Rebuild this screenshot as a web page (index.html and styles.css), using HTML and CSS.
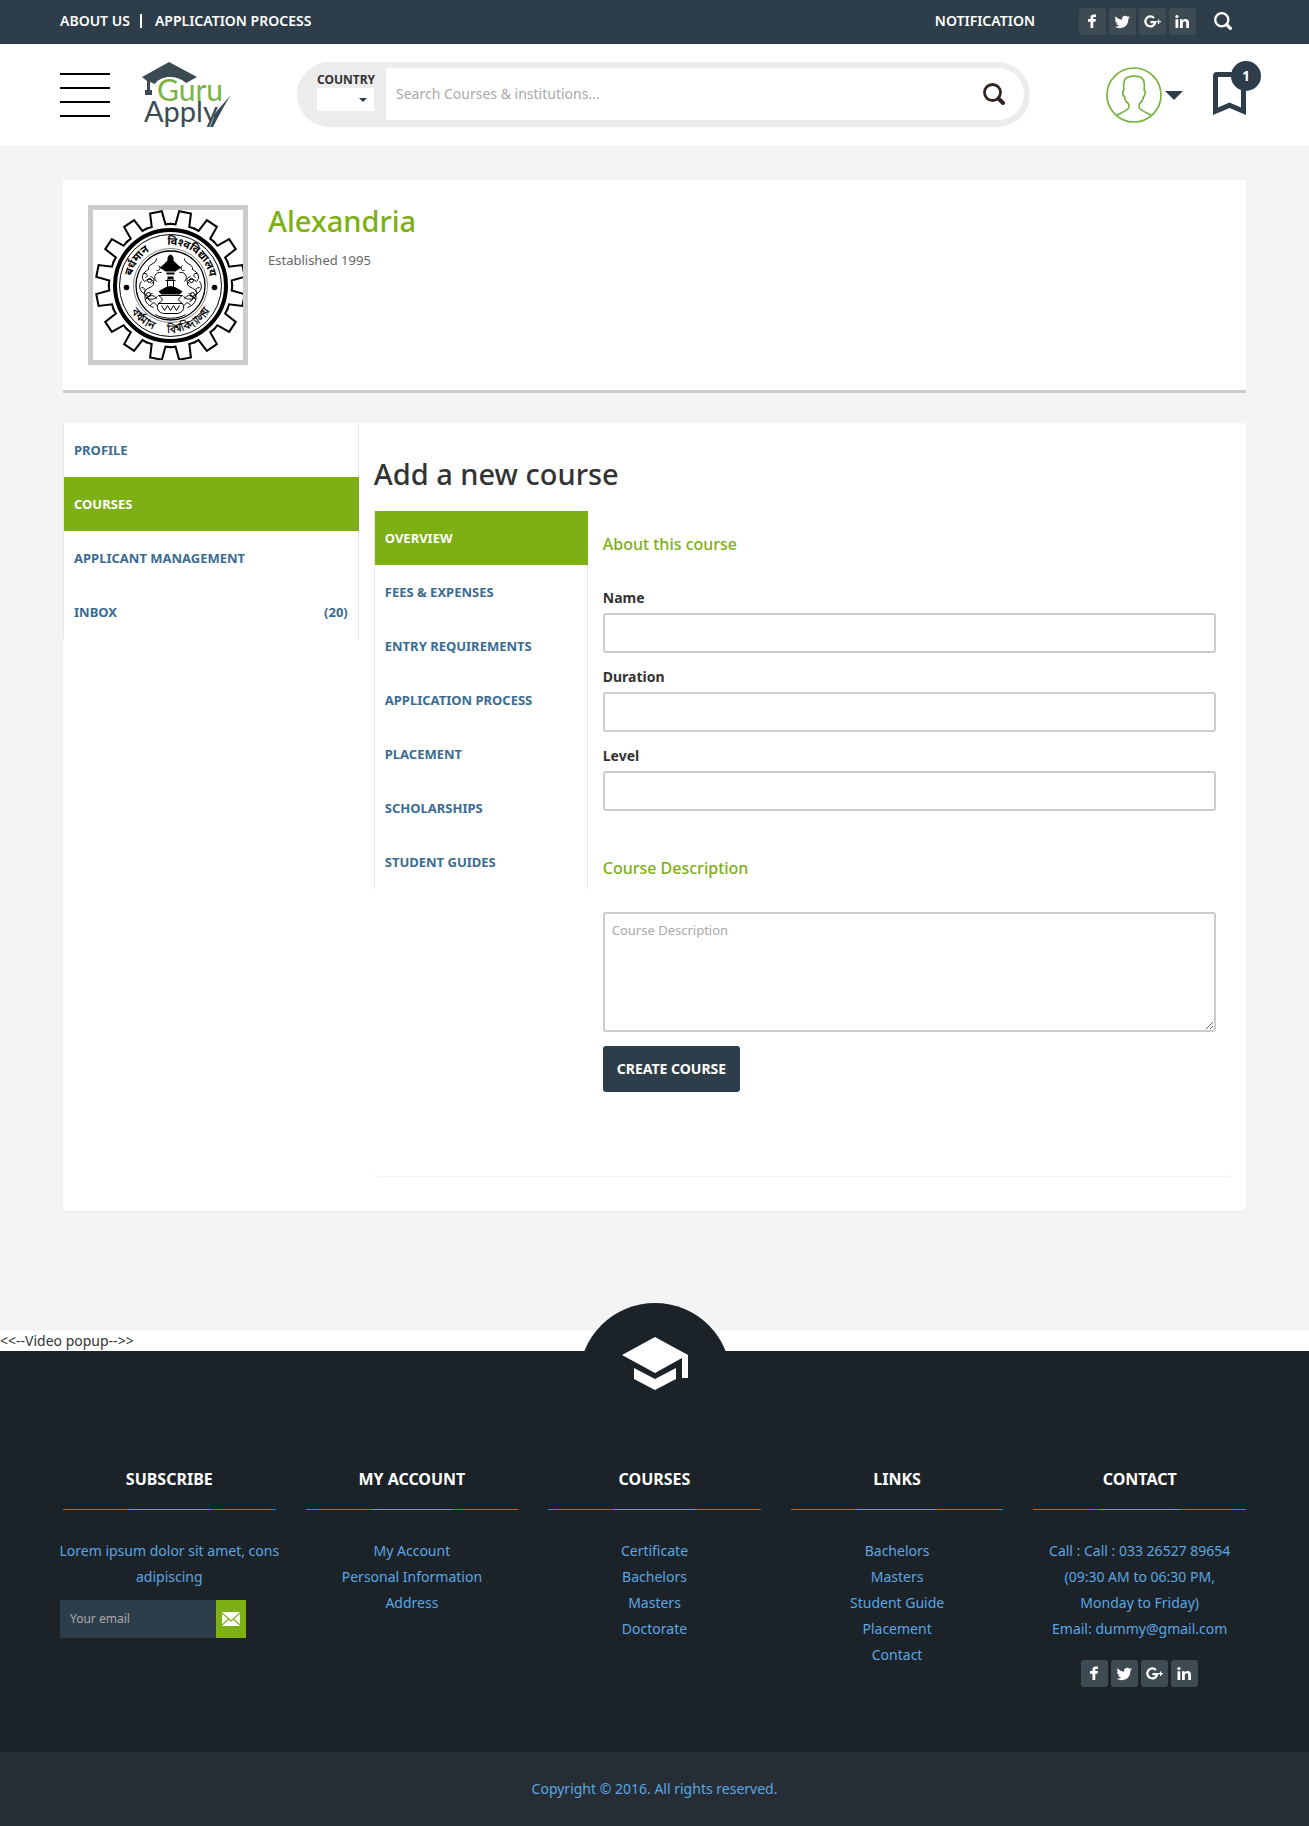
FILE: index.html
```html
<!DOCTYPE html>
<html lang="en">
<head>
<meta charset="utf-8">
<meta name="viewport" content="width=device-width, initial-scale=1">
<title>Guru Apply - Add a new course</title>
<link rel="stylesheet" href="styles.css">
</head>
<body>
<svg class="defs" aria-hidden="true">
  <symbol id="i-facebook" viewBox="0 0 27 27"><path d="M11.500 20v-6.200H9v-2.700h2.500V9.300c0-2 1.200-2.900 3-2.900.9 0 1.700.1 2.500.2v2.300h-1.500c-1 0-1.200.5-1.200 1.200v1h2.600l-.4 2.700h-2.200V20z"/></symbol>
  <symbol id="i-twitter" viewBox="0 0 27 27"><path d="M21 9.200c-.6.3-1.200.4-1.800.5.700-.4 1.100-1 1.400-1.700-.6.4-1.300.6-2 .8a3.200 3.200 0 0 0-5.500 2.900C10.500 11.600 8.100 10.300 6.600 8.300c-.9 1.500-.4 3.300 1 4.200-.5 0-1-.1-1.500-.4 0 1.600 1.100 2.900 2.600 3.200-.5.1-1 .1-1.500 0 .4 1.300 1.600 2.200 3 2.200A6.500 6.500 0 0 1 5.600 18.800c4.900 3 13.800 1.500 13.800-8 .6-.4 1.200-1 1.600-1.600z"/></symbol>
  <symbol id="i-google" viewBox="0 0 27 27"><path fill="none" stroke="currentColor" stroke-width="2.200" d="M15 10a5 5 0 1 0 1.300 4.200H11.400"/><path d="M19 11.500h1.200v1.600h1.700v1.200h-1.700V16H19v-1.700h-1.600v-1.200H19z"/></symbol>
  <symbol id="i-linkedin" viewBox="0 0 27 27"><path d="M6.500 11.200h2.800V20H6.500zM11 11.200h2.700v1.200c.6-.9 1.500-1.500 2.800-1.500 2.400 0 3.500 1.500 3.500 4V20h-2.800v-4.700c0-1.300-.5-2-1.500-2-1.100 0-1.900.7-1.900 2.100V20H11z"/><circle cx="7.900" cy="8.500" r="1.600"/></symbol>
  <symbol id="i-search" viewBox="0 0 22 22"><circle cx="9.500" cy="9.500" r="8" fill="none" stroke="currentColor" stroke-width="2.800"/><path d="M15.500 15.500l4.500 4.500" fill="none" stroke="currentColor" stroke-width="4" stroke-linecap="round"/></symbol>
</svg>

<div class="topbar">
  <nav class="toplinks" aria-label="Secondary">
    <a href="#about">ABOUT US</a>
    <a href="#process">APPLICATION PROCESS</a>
  </nav>
  <div class="topright">
    <a href="#notification">NOTIFICATION</a>
    <div class="social">
      <a href="#fb" aria-label="Facebook"><svg><use href="#i-facebook"/></svg></a>
      <a href="#tw" aria-label="Twitter"><svg><use href="#i-twitter"/></svg></a>
      <a href="#gp" aria-label="Google Plus"><svg><use href="#i-google"/></svg></a>
      <a href="#li" aria-label="LinkedIn"><svg><use href="#i-linkedin"/></svg></a>
    </div>
    <button class="plain topsearch" aria-label="Search"><svg><use href="#i-search"/></svg></button>
  </div>
</div>

<header class="header">
  <button class="plain burger" aria-label="Menu"><span></span><span></span><span></span><span></span></button>
  <a class="logo" href="#home" aria-label="Guru Apply">
    <svg viewBox="0 0 90 67" width="90" height="67">
      <path fill="#3a4b54" d="M0 15L27 0l28 15-11 6c-9-8-25-8-31 1l-5-2v8h2v5H3v-5h2V19z"/>
      <text x="15" y="39" class="logo-guru">Guru</text>
      <text x="2" y="60" class="logo-apply">Apply</text>
      <path fill="#3a4b54" d="M71 54C77 46 83 40 89 33c-6 9-12 20-18 32h-3l4-10z"/>
    </svg>
  </a>
  <form class="search">
    <div class="country">
      <label for="country">COUNTRY</label>
      <span class="pick"><select id="country"><option></option></select></span>
    </div>
    <div class="query">
      <input type="text" aria-label="Search" placeholder="Search Courses &amp; institutions...">
      <button type="button" class="plain go" aria-label="Search"><svg><use href="#i-search"/></svg></button>
    </div>
  </form>
  <button class="plain user" aria-label="Account">
    <svg viewBox="0 0 56 56" width="56" height="56" fill="none" stroke="#77b33e" stroke-width="1.700"><circle cx="28" cy="28" r="27"/><path d="M10.500 48.500c5-3 11-5 12.200-7.500.4-1.500.3-3.500-.3-4.500-2.300-1.500-3.800-4.500-3.900-7-1.500-.5-1.900-3-1.700-4.500 0-1 .6-1.500 1-1.800-.8-10 .5-14 10.200-14s11 4 10.200 14c.6.300 1 1 1 1.800 0 1.800-.3 4-1.700 4.500-.3 2.500-1.600 5.500-3.900 7-.6 1-.7 3-.3 4.500 1.200 2.500 7.200 4.500 12.200 7.500"/></svg>
    <svg viewBox="0 0 18 9" width="18" height="9"><path fill="#2d3e4a" d="M0 0h18L9 9z"/></svg>
  </button>
  <a class="saved" href="#saved" aria-label="Saved courses">
    <svg viewBox="0 0 33 43" width="33" height="43"><path fill="#2d3e4a" fill-rule="evenodd" d="M0 43V4a4 4 0 0 1 4-4h25a4 4 0 0 1 4 4v39l-16.500-7zM5 35.500l11.500-5 11.500 5V5H5z"/></svg>
    <span class="badge">1</span>
  </a>
</header>

<main class="page">
  <section class="hero">
    <svg class="emblem" viewBox="0 0 150 150" role="img" aria-label="University emblem">
      <defs>
        <path id="tooth" d="M-12.500-60.500L-7-61-6-74.500 6-74.500 7-61 12.500-60.500"/>
        <path id="arc-top" d="M-37.900 12.300A40 40 0 1 1 37.900 12.300"/>
        <path id="arc-bottom" d="M-46.500 11A48 48 0 0 0 46.500 11"/>
        <g id="flourish"><path d="M-14-27c0 6-9 5-8 11-6 3-8 8-4 12 5-4 10-2 9 3-2 4-8 3-9 8 0 7 8 9 13 4M-9-13c-6-1-9 5-5 9M-29-4c-4 5-1 11 4 13-2 6 2 11 8 13M-20-9c4 1 5 5 1 7M-18 8c-5 1-6 7-1 8M-25 14c3-5 9-5 11-1M-27-12c4-1 5 3 2 4M-12-20c3 2 1 6-2 5M-29 2c4 0 5 4 2 5M-20 20c2-4 5-3 6 0"/><circle cx="-21" cy="-5" r="2"/><circle cx="-22" cy="9" r="2"/></g>
      </defs>
      <g transform="translate(77.500 75.500)" fill="none" stroke="#000">
        <g stroke-width="2">
          <use href="#tooth" transform="rotate(11.250)"/><use href="#tooth" transform="rotate(33.750)"/><use href="#tooth" transform="rotate(56.250)"/><use href="#tooth" transform="rotate(78.750)"/>
          <use href="#tooth" transform="rotate(101.250)"/><use href="#tooth" transform="rotate(123.750)"/><use href="#tooth" transform="rotate(146.250)"/><use href="#tooth" transform="rotate(168.750)"/>
          <use href="#tooth" transform="rotate(191.250)"/><use href="#tooth" transform="rotate(213.750)"/><use href="#tooth" transform="rotate(236.250)"/><use href="#tooth" transform="rotate(258.750)"/>
          <use href="#tooth" transform="rotate(281.250)"/><use href="#tooth" transform="rotate(303.750)"/><use href="#tooth" transform="rotate(326.250)"/><use href="#tooth" transform="rotate(348.750)"/>
        </g>
        <circle r="55.500" stroke-width="4"/><circle r="51"/><circle r="37" stroke-width=".5"/><circle r="34.500" stroke-width="1.300"/>
        <g fill="#000" stroke="none">
          <circle cx="-44" cy="2" r="2.800"/><circle cx="44" cy="2" r="2.800"/>
          <text class="ring"><textPath href="#arc-top" startOffset="25%">बर्धमान</textPath></text>
          <text class="ring"><textPath href="#arc-top" startOffset="67%">विश्वविद्यालय</textPath></text>
          <text class="ring"><textPath href="#arc-bottom" startOffset="25%">বর্ধমান</textPath></text>
          <text class="ring"><textPath href="#arc-bottom" startOffset="67%">বিশ্ববিদ্যালয়</textPath></text>
          <path d="M-3-28Q0-34 3-28V-25L8-20l3 2-6 4H-5l-6-4 3-2 5-5zM-4-13h8v2h-8zM-3-9h6v3h-6zM-9 4Q0-3 9 4l3 2-3 3H-9l-3-3z"/>
        </g>
        <path d="M-5-5h10M-3-6v8M3-6v8M-12 10h24c-5 3-5 5 0 8 3 5 0 9-5 10H-7c-5-1-8-5-5-10 5-3 5-5 0-8zM-12 18h24M-9 20l3 5 3-5 3 5 3-5 3 5 3-5M-15 29c7 5 23 5 30 0"/>
        <use href="#flourish"/><use href="#flourish" transform="scale(-1 1)"/>
      </g>
    </svg>
    <div class="about">
      <h1>Alexandria</h1>
      <p>Established 1995</p>
    </div>
  </section>

  <section class="panel">
    <nav class="menu" aria-label="Institution">
      <a href="#profile">PROFILE</a>
      <a href="#courses" class="active">COURSES</a>
      <a href="#applicants">APPLICANT MANAGEMENT</a>
      <a href="#inbox">INBOX <span>(20)</span></a>
    </nav>
    <div class="content">
      <h2>Add a new course</h2>
      <div class="editor">
        <nav class="menu" aria-label="Course sections">
          <a href="#overview" class="active">OVERVIEW</a>
          <a href="#fees">FEES &amp; EXPENSES</a>
          <a href="#entry">ENTRY REQUIREMENTS</a>
          <a href="#apply">APPLICATION PROCESS</a>
          <a href="#placement">PLACEMENT</a>
          <a href="#scholarships">SCHOLARSHIPS</a>
          <a href="#guides">STUDENT GUIDES</a>
        </nav>
        <form class="form">
          <h3>About this course</h3>
          <label for="name">Name</label>
          <input type="text" id="name">
          <label for="duration">Duration</label>
          <input type="text" id="duration">
          <label for="level">Level</label>
          <input type="text" id="level">
          <h3 class="second"><label for="description">Course Description</label></h3>
          <textarea id="description" placeholder="Course Description"></textarea>
          <button type="button" class="create">CREATE COURSE</button>
        </form>
      </div>
    </div>
  </section>
</main>

<div class="popup">&lt;&lt;--Video popup--&gt;&gt;</div>

<footer class="footer">
  <div class="crest">
    <svg viewBox="0 0 66 53" width="66" height="53" fill="#fff"><path d="M33 0l33 18v23h-6V21L33 36 0 18zM12 31l21 11 21-11v11L33 53 12 42z"/></svg>
  </div>
  <div class="columns">
    <section>
      <h4>SUBSCRIBE</h4>
      <p>Lorem ipsum dolor sit amet, cons adipiscing</p>
      <form class="subscribe">
        <input type="email" aria-label="Your email" placeholder="Your email">
        <button type="button" aria-label="Subscribe"><svg viewBox="0 0 18 14" width="18" height="14"><rect width="18" height="14" rx="1" fill="#fff"/><path d="M0 1l9 8 9-8M0 13l6.500-6M18 13l-6.500-6" fill="none" stroke="#7cb014" stroke-width="1.200"/></svg></button>
      </form>
    </section>
    <section>
      <h4>MY ACCOUNT</h4>
      <a href="#account">My Account</a>
      <a href="#info">Personal Information</a>
      <a href="#address">Address</a>
    </section>
    <section>
      <h4>COURSES</h4>
      <a href="#certificate">Certificate</a>
      <a href="#bachelors">Bachelors</a>
      <a href="#masters">Masters</a>
      <a href="#doctorate">Doctorate</a>
    </section>
    <section>
      <h4>LINKS</h4>
      <a href="#bachelors">Bachelors</a>
      <a href="#masters">Masters</a>
      <a href="#guide">Student Guide</a>
      <a href="#placement">Placement</a>
      <a href="#contact">Contact</a>
    </section>
    <section>
      <h4>CONTACT</h4>
      <p>Call : Call : 033 26527 89654<br>(09:30 AM to 06:30 PM,<br>Monday to Friday)</p>
      <a href="mailto:dummy@gmail.com">Email: dummy@gmail.com</a>
      <div class="social">
        <a href="#fb" aria-label="Facebook"><svg><use href="#i-facebook"/></svg></a>
        <a href="#tw" aria-label="Twitter"><svg><use href="#i-twitter"/></svg></a>
        <a href="#gp" aria-label="Google Plus"><svg><use href="#i-google"/></svg></a>
        <a href="#li" aria-label="LinkedIn"><svg><use href="#i-linkedin"/></svg></a>
      </div>
    </section>
  </div>
  <div class="copyright">Copyright © 2016. All rights reserved.</div>
</footer>
</body>
</html>
```
FILE: styles.css
```css
* { box-sizing: border-box; }

body {
  margin: 0;
  background: #fff;
  color: #333;
  font: 14px/20px "Noto Sans", "Open Sans", sans-serif;
}

h1, h2, h3, h4, p { margin: 0; }
a { color: inherit; text-decoration: none; }
svg { display: block; }
input, textarea, select, button { font: inherit; color: inherit; }
input::placeholder, textarea::placeholder { color: #a9a9a9; opacity: 1; }
.defs { position: absolute; width: 0; height: 0; }
.plain { padding: 0; border: 0; background: none; cursor: pointer; }

/* Top bar */
.topbar {
  display: flex;
  justify-content: space-between;
  align-items: center;
  height: 44px;
  padding: 0 77px 2px 60px;
  background: #2d3e4a;
  color: #fff;
  font-weight: 600;
}
.toplinks { display: flex; align-items: center; }
.toplinks a { line-height: 14px; }
.toplinks a + a { margin-left: 10px; padding-left: 13px; border-left: 2px solid #fff; }
.topright { display: flex; align-items: center; }
.topright .social { margin-left: 44px; }
.topsearch { margin-left: 18px; color: #fff; }
.topsearch svg { width: 18px; height: 18px; }

.social { display: flex; gap: 3px; }
.social a {
  width: 27px;
  height: 27px;
  border-radius: 3px;
  background: #3e4b53;
  color: #fff;
}
.social svg { width: 27px; height: 27px; fill: currentColor; }

/* Header */
.header {
  display: flex;
  align-items: center;
  height: 102px;
  padding: 0 63px 0 60px;
}
.burger { display: flex; flex-direction: column; gap: 12px; width: 50px; }
.burger span { height: 2px; background: #000; }
.logo { margin: 0 65px 0 32px; }
.logo-guru { fill: #7bb342; font: 30px Lato, sans-serif; }
.logo-apply { fill: #3a4b54; font: 29px Lato, sans-serif; }

.search {
  display: flex;
  flex: 1;
  height: 65px;
  margin-bottom: 2px;
  padding: 6px 6px 7px 20px;
  border-radius: 33px;
  background: #ececec;
}
.country { width: 57px; margin-right: 12px; padding-top: 4px; }
.country label { display: block; font-size: 12px; font-weight: 700; line-height: 16px; }
.pick { position: relative; display: block; }
.pick::after {
  content: "";
  position: absolute;
  right: 7px;
  top: 10px;
  border: 4px solid transparent;
  border-top-color: #2d3e4a;
  border-bottom: 0;
}
.pick select {
  display: block;
  width: 100%;
  height: 23px;
  border: 0;
  border-radius: 0;
  background: #fff;
  appearance: none;
}
.query {
  display: flex;
  flex: 1;
  padding: 0 19px 0 10px;
  border-radius: 0 26px 26px 0;
  background: #fff;
}
.query input { flex: 1; min-width: 0; padding: 0; border: 0; background: none; }
.go { color: #2f2623; }
.go svg { width: 22px; height: 22px; }
.user { display: flex; align-items: center; gap: 3px; margin: 0 30px 0 76px; }
.saved { position: relative; margin-bottom: 4px; }
.badge {
  position: absolute;
  left: 18px;
  top: -11px;
  width: 30px;
  height: 30px;
  border-radius: 50%;
  background: #2d3e4a;
  color: #fff;
  font-weight: 700;
  line-height: 30px;
  text-align: center;
}

/* Page */
.page { padding: 34px 63px 120px; background: #f4f4f4; }
.hero {
  display: flex;
  gap: 20px;
  margin-bottom: 30px;
  padding: 25px;
  border-bottom: 3px solid #ccc;
  background: #fff;
}
.emblem { width: 160px; height: 160px; border: 5px solid #ccc; }
.ring { font: 700 11px "Noto Sans", sans-serif; text-anchor: middle; }
.hero h1 { color: #7cb014; font-size: 29px; font-weight: 500; line-height: 32px; }
.hero p { margin-top: 13px; color: #666; font-size: 13px; }

.panel {
  display: flex;
  min-height: 788px;
  border-radius: 4px;
  background: #fff;
  box-shadow: 0 1px 1px rgba(0, 0, 0, .05);
}
.menu {
  align-self: flex-start;
  border: solid #e7e7e7;
  border-width: 0 1px;
  color: #3a6c93;
  font-size: 13px;
  font-weight: 700;
}
.menu a {
  display: flex;
  justify-content: space-between;
  margin-right: -1px;
  padding: 17px 11px 17px 10px;
}
.menu .active { background: #7cb014; color: #fff; }
.panel > .menu { width: 25%; }
.content { flex: 1; padding: 34px 15px; }
.content h2 { margin-bottom: 21px; font-size: 29px; font-weight: 500; line-height: 33px; }
.editor {
  display: flex;
  gap: 15px;
  min-height: 666px;
  padding-right: 15px;
  border-bottom: 1px solid #f3f3f3;
  border-radius: 4px;
}
.editor .menu { width: 25%; min-width: 214px; }

.form { flex: 1; }
.form h3 { margin: 23px 0 34px; color: #7cb014; font-size: 16px; font-weight: 500; line-height: 20px; }
.form > label { display: block; margin-bottom: 5px; font-weight: 700; }
.form input, .form textarea {
  display: block;
  width: 100%;
  border: 2px solid #ccc;
  border-radius: 3px;
  background: #fff;
}
.form input { height: 40px; margin-bottom: 14px; padding: 0 8px; }
.form .second { margin-top: 47px; }
.form textarea { height: 120px; margin-bottom: 14px; padding: 6px 7px; font-size: 13px; }
.create {
  height: 46px;
  padding: 0 14px;
  border: 0;
  border-radius: 3px;
  background: #2d3e4a;
  color: #fff;
  font-weight: 700;
}

.popup { height: 20px; }

/* Footer */
.footer { display: flow-root; position: relative; background: #1b2228; color: #5ba7e3; }
.crest {
  display: flex;
  justify-content: center;
  width: 152px;
  height: 152px;
  margin: -48px auto 0;
  padding-top: 34px;
  border-radius: 50%;
  background: #1b2228;
}
.columns {
  display: grid;
  grid-template-columns: repeat(5, 1fr);
  gap: 30px;
  min-height: 297px;
  padding: 14px 63px 0;
  text-align: center;
  line-height: 26px;
}
.columns h4 {
  margin-bottom: 28px;
  padding-bottom: 21px;
  background: linear-gradient(90deg, #1a8ee0 31%, #7cb014 31% 69%, #1a8ee0 69%) bottom / 100% 1px no-repeat;
  color: #fff;
  font-size: 16px;
  font-weight: 700;
  line-height: 20px;
}
.columns p { margin: 0 -10px; }
.columns section > a { display: block; }
.subscribe { display: flex; width: 186px; height: 38px; margin: 10px 0 0 -3px; }
.subscribe input {
  width: 156px;
  padding: 0 10px;
  border: 0;
  border-radius: 0;
  background: #2d3e4a;
  font-size: 12px;
}
.subscribe button { width: 30px; padding: 0 6px; border: 0; background: #7cb014; }
.columns .social { justify-content: center; margin-top: 18px; }
.copyright { padding: 27px; background: #262d34; text-align: center; }
```
